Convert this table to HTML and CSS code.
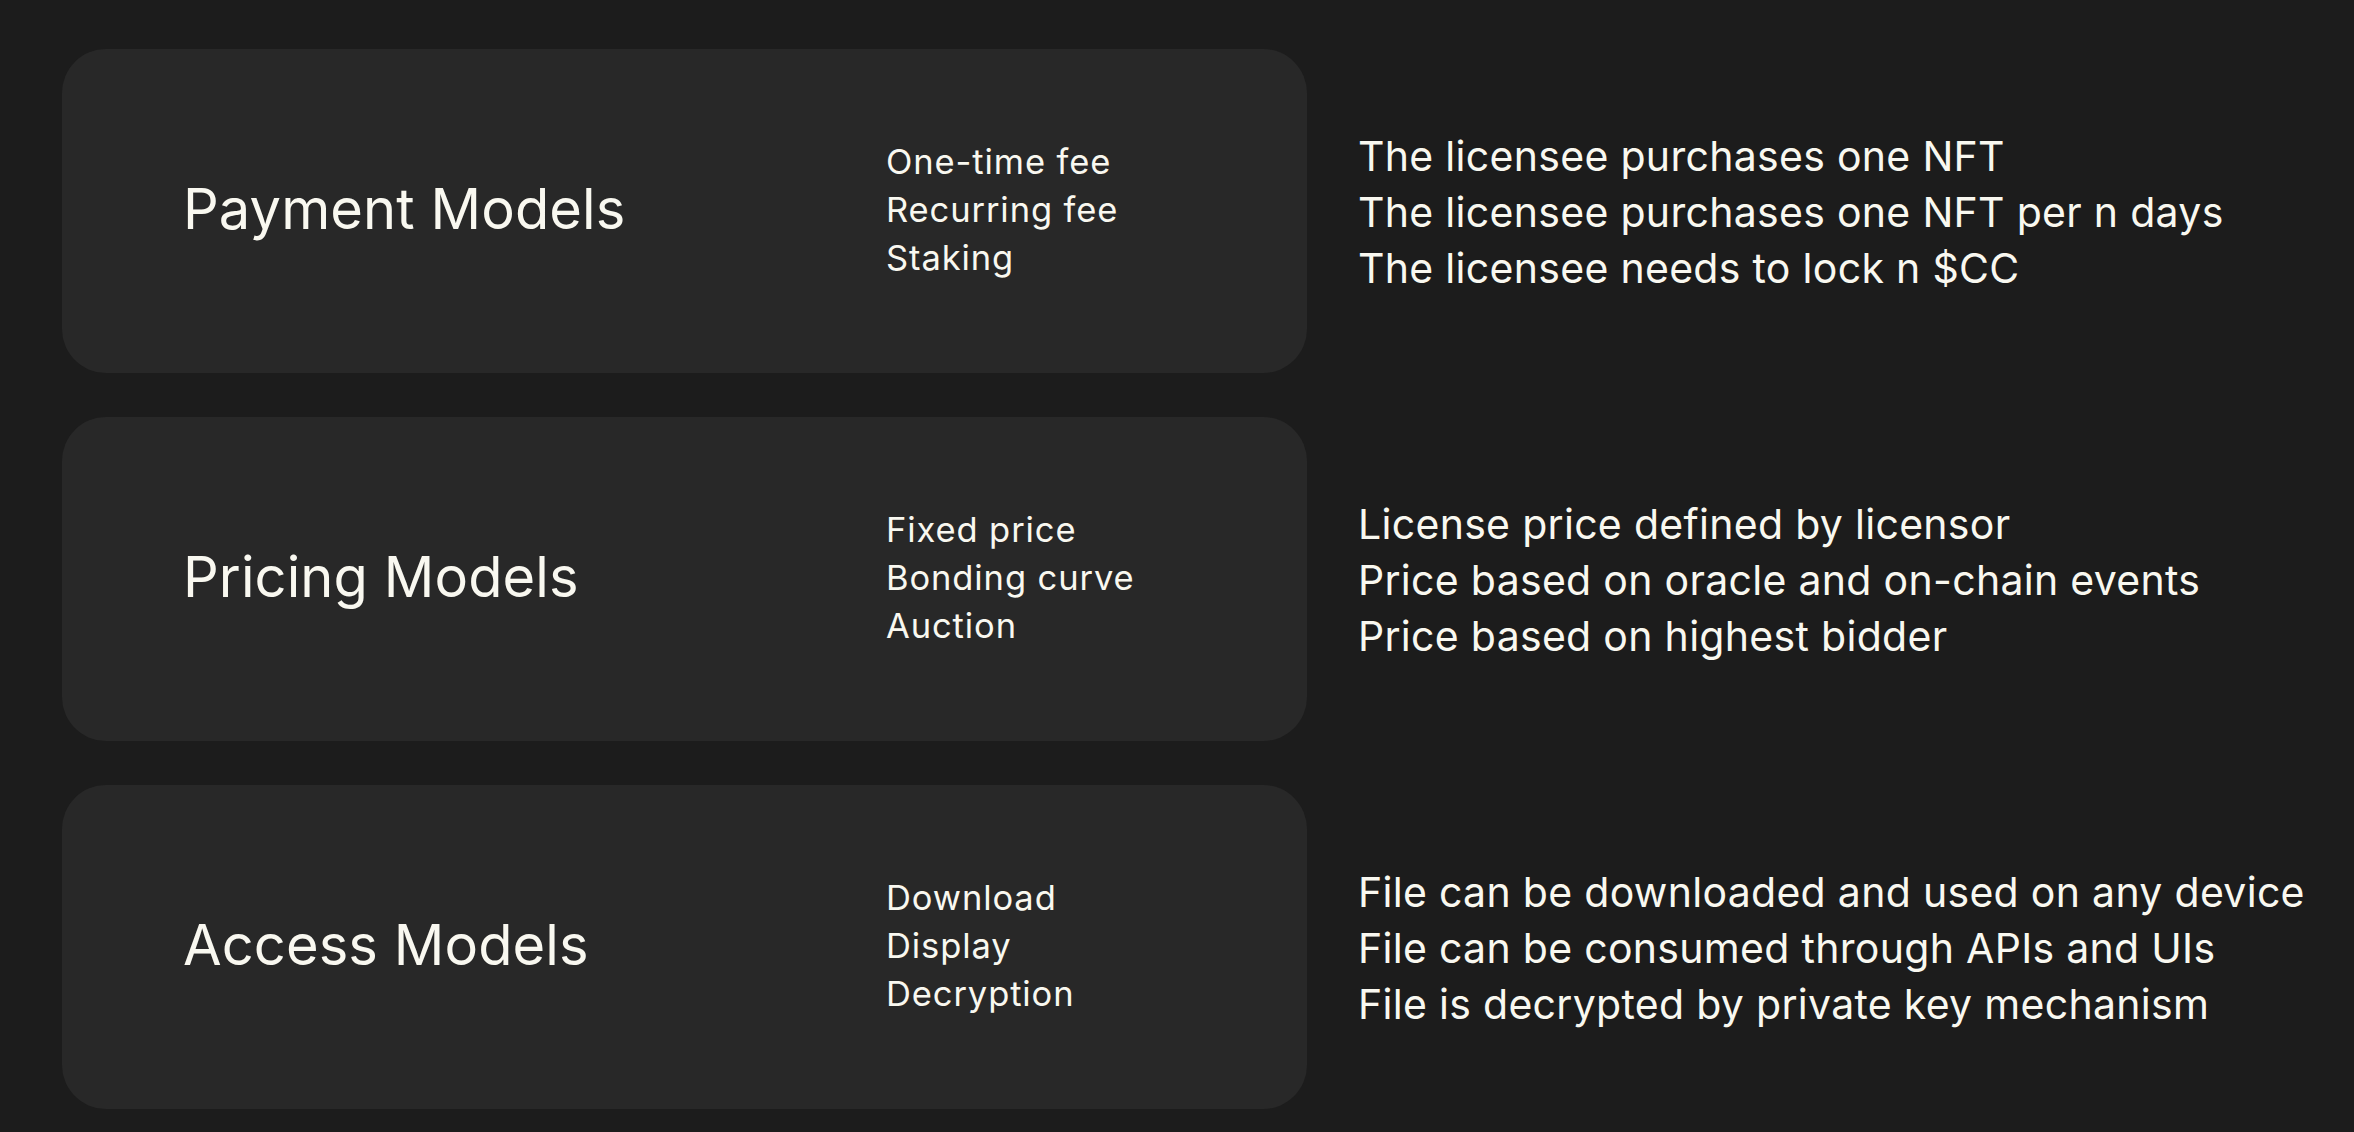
FILE: index.html
```html
<!DOCTYPE html>
<html lang="en">
<head>
<meta charset="utf-8">
<title>Models</title>
<link rel="stylesheet" href="styles.css">
</head>
<body>
<main class="page">
  <section class="row">
    <div class="card">
      <h2 class="title">Payment Models</h2>
      <ul class="options">
        <li>One-time fee</li>
        <li>Recurring fee</li>
        <li>Staking</li>
      </ul>
    </div>
    <ul class="desc">
      <li>The licensee purchases one NFT</li>
      <li>The licensee purchases one NFT per n days</li>
      <li>The licensee needs to lock n $CC</li>
    </ul>
  </section>
  <section class="row">
    <div class="card">
      <h2 class="title">Pricing Models</h2>
      <ul class="options">
        <li>Fixed price</li>
        <li>Bonding curve</li>
        <li>Auction</li>
      </ul>
    </div>
    <ul class="desc">
      <li>License price defined by licensor</li>
      <li>Price based on oracle and on-chain events</li>
      <li>Price based on highest bidder</li>
    </ul>
  </section>
  <section class="row">
    <div class="card">
      <h2 class="title">Access Models</h2>
      <ul class="options">
        <li>Download</li>
        <li>Display</li>
        <li>Decryption</li>
      </ul>
    </div>
    <ul class="desc">
      <li>File can be downloaded and used on any device</li>
      <li>File can be consumed through APIs and UIs</li>
      <li>File is decrypted by private key mechanism</li>
    </ul>
  </section>
</main>
</body>
</html>
```
FILE: styles.css
```css
html, body {
  margin: 0;
  padding: 0;
  background: #1c1c1c;
}
body {
  font-family: Inter, "Liberation Sans", Arial, sans-serif;
  color: #f9f8f0;
  width: 2354px;
  height: 1132px;
  overflow: hidden;
}
.page {
  display: flex;
  flex-direction: column;
  gap: 44px;
  padding: 49px 0 0 62px;
}
.row {
  display: flex;
  align-items: center;
  gap: 51px;
}
.card {
  box-sizing: border-box;
  width: 1245px;
  height: 324px;
  flex: none;
  background: #282828;
  border-radius: 44px;
  display: flex;
  align-items: center;
  padding-left: 121px;
}
.title {
  margin: -5px 0 0 0;
  width: 703px;
  font-size: 56px;
  font-weight: 400;
  letter-spacing: 0.1px;
}
ul {
  list-style: none;
  margin: 0;
  padding: 0;
}
.options {
  margin-top: -3px;
}
.options li {
  font-size: 34.5px;
  line-height: 48px;
  letter-spacing: 0.9px;
}
.desc {
  margin-top: 2px;
}
.desc li {
  font-size: 41px;
  line-height: 56px;
  letter-spacing: 0.3px;
}
```
